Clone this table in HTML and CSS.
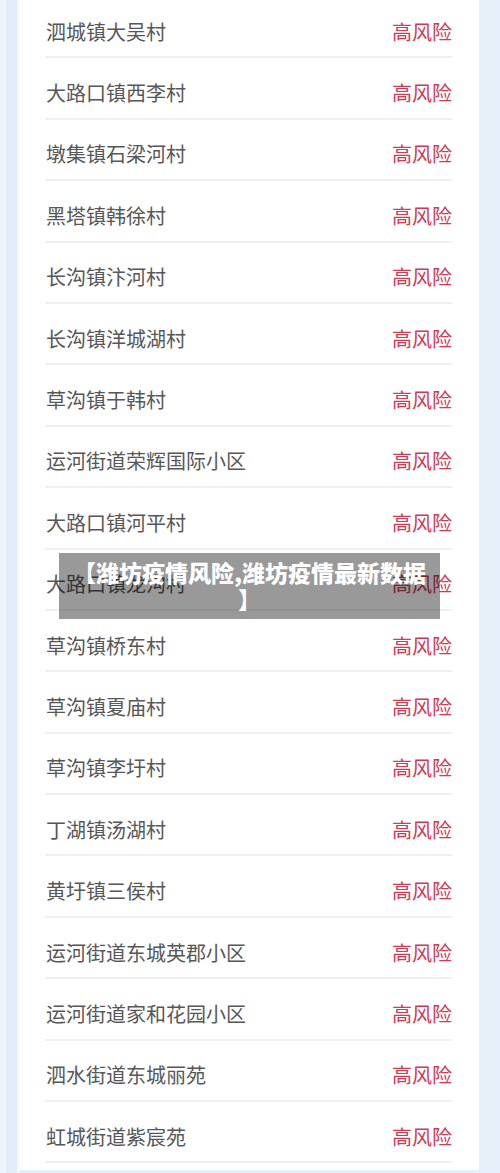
FILE: index.html
```html
<!DOCTYPE html>
<html lang="zh-CN">
<head>
  <meta charset="UTF-8">
  <meta name="viewport" content="width=device-width, initial-scale=1">
  <title>潍坊疫情风险,潍坊疫情最新数据</title>
  <link rel="stylesheet" href="styles.css">
</head>
<body>
  <div class="page">
    <div class="card">
      <ul class="risk-list">
        <li class="row"><span class="name">泗城镇大吴村</span><span class="level">高风险</span></li>
        <li class="row"><span class="name">大路口镇西李村</span><span class="level">高风险</span></li>
        <li class="row"><span class="name">墩集镇石梁河村</span><span class="level">高风险</span></li>
        <li class="row"><span class="name">黑塔镇韩徐村</span><span class="level">高风险</span></li>
        <li class="row"><span class="name">长沟镇汴河村</span><span class="level">高风险</span></li>
        <li class="row"><span class="name">长沟镇洋城湖村</span><span class="level">高风险</span></li>
        <li class="row"><span class="name">草沟镇于韩村</span><span class="level">高风险</span></li>
        <li class="row"><span class="name">运河街道荣辉国际小区</span><span class="level">高风险</span></li>
        <li class="row"><span class="name">大路口镇河平村</span><span class="level">高风险</span></li>
        <li class="row"><span class="name">大路口镇龙沟村</span><span class="level">高风险</span></li>
        <li class="row"><span class="name">草沟镇桥东村</span><span class="level">高风险</span></li>
        <li class="row"><span class="name">草沟镇夏庙村</span><span class="level">高风险</span></li>
        <li class="row"><span class="name">草沟镇李圩村</span><span class="level">高风险</span></li>
        <li class="row"><span class="name">丁湖镇汤湖村</span><span class="level">高风险</span></li>
        <li class="row"><span class="name">黄圩镇三侯村</span><span class="level">高风险</span></li>
        <li class="row"><span class="name">运河街道东城英郡小区</span><span class="level">高风险</span></li>
        <li class="row"><span class="name">运河街道家和花园小区</span><span class="level">高风险</span></li>
        <li class="row"><span class="name">泗水街道东城丽苑</span><span class="level">高风险</span></li>
        <li class="row"><span class="name">虹城街道紫宸苑</span><span class="level">高风险</span></li>
      </ul>
    </div>
    <div class="caption">【潍坊疫情风险,潍坊疫情最新数据】</div>
  </div>
</body>
</html>
```

FILE: styles.css
```css
* {
  box-sizing: border-box;
}
body {
  margin: 0;
  font-family: "Noto Sans CJK SC", "Noto Sans", sans-serif;
  background: #e7f0fa;
}
.page {
  position: relative;
  height: 1173px;
  overflow: hidden;
  padding: 0 21px 0 19px;
  background: linear-gradient(to right, #eef4fa 0, #eef4fa 6px, #e2edf8 6px, #e2edf8 17px, #f3f8fc 17px, #f3f8fc 19px, #e7f0fa 19px);
}
.card {
  background: #fff;
  height: 1173px;
  padding: 0 27px 0 26px;
}
.risk-list {
  list-style: none;
  margin: -3px 0 0;
  padding: 0;
}
.row {
  display: flex;
  justify-content: space-between;
  align-items: center;
  height: 61.4px;
  padding-top: 10px;
  border-bottom: 2px solid #f0f0f0;
  font-size: 20px;
  line-height: 24px;
}
.name {
  color: #575757;
  padding-left: 1px;
}
.level {
  color: #cf3a54;
}
.caption {
  position: absolute;
  top: 553px;
  left: 59px;
  width: 381px;
  padding: 6px 10px;
  background: rgba(0, 0, 0, 0.4);
  color: #fff;
  font-size: 23px;
  font-weight: 900;
  line-height: 27px;
  text-align: center;
  line-break: anywhere;
}
```
